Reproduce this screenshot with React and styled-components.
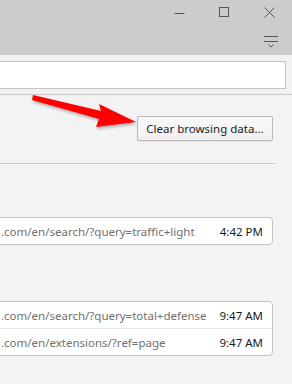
import React from 'react';
import styled, { createGlobalStyle } from 'styled-components';

const GlobalStyle = createGlobalStyle`
  html, body {
    margin: 0;
    padding: 0;
  }
  body {
    font-family: "Noto Sans", "Open Sans", sans-serif;
    background: #f3f3f3;
  }
`;

const Window = styled.div`
  position: relative;
  width: 292px;
  height: 384px;
  overflow: hidden;
  background: #f3f3f3;
`;

const TitleBar = styled.div`
  height: 55px;
  background: #cccccc;
  display: flex;
  flex-direction: column;
  align-items: flex-end;
`;

const Controls = styled.div`
  display: flex;
  height: 25px;
`;

const ControlButton = styled.div`
  width: 45px;
  height: 25px;
  display: flex;
  align-items: center;
  justify-content: center;
`;

const MenuButton = styled.div`
  width: 26px;
  height: 20px;
  margin: 7px 8px 0 0;
  display: flex;
  align-items: center;
  justify-content: center;
`;

const Toolbar = styled.div`
  height: 39px;
  background: #f2f2f2;
  border-bottom: 1px solid #c9c9c9;
  display: flex;
  align-items: center;
`;

const AddressBox = styled.div`
  flex: 1;
  height: 26px;
  margin-left: -4px;
  margin-right: 6px;
  background: #ffffff;
  border: 1px solid #c4c4c4;
`;

const Content = styled.div`
  display: flex;
  flex-direction: column;
`;

const ButtonRow = styled.div`
  display: flex;
  justify-content: flex-end;
  padding: 21px 19px 0 0;
`;

const ClearButton = styled.button`
  height: 25px;
  width: 136px;
  padding: 0;
  font-family: "Noto Sans", "Open Sans", sans-serif;
  font-size: 11.5px;
  color: #222;
  background: linear-gradient(#f9f9f9, #f0f0f0);
  border: 1px solid #b9b9b9;
  border-radius: 2px;
  box-shadow: 0 1px 1px rgba(0, 0, 0, 0.06);
`;

const Separator = styled.div`
  height: 1px;
  background: #c8c8c8;
  margin: 22px 17px 0 0;
`;

const HistoryCard = styled.div`
  margin: ${(p) => p.$top}px 19px 0 -10px;
  background: #ffffff;
  border: 1px solid #c2c2c2;
  border-radius: 4px;
`;

const HistoryRow = styled.div`
  height: 26px;
  display: flex;
  align-items: center;
  padding: 0 9px 0 10px;
  font-size: 11.5px;
  & + & {
    border-top: 1px solid #e6e6e6;
  }
`;

const Url = styled.span`
  flex: 1;
  color: #707070;
  white-space: nowrap;
`;

const Time = styled.span`
  color: #1a1a1a;
  white-space: nowrap;
`;

const Arrow = styled.svg`
  position: absolute;
  left: 28px;
  top: 92px;
  overflow: visible;
`;

const history = [
  [{ url: '.com/en/search/?query=traffic+light', time: '4:42 PM' }],
  [
    { url: '.com/en/search/?query=total+defense', time: '9:47 AM' },
    { url: '.com/en/extensions/?ref=page', time: '9:47 AM' },
  ],
];

const App = () => {
  return (
    <Window>
      <GlobalStyle />
      <TitleBar>
        <Controls>
          <ControlButton>
            <svg width="11" height="10" viewBox="0 0 11 10">
              <path d="M0.5 5.5h10" stroke="#555" strokeWidth="1" />
            </svg>
          </ControlButton>
          <ControlButton>
            <svg width="11" height="11" viewBox="0 0 11 11">
              <rect x="0.5" y="0.5" width="9" height="9" fill="none" stroke="#555" strokeWidth="1" />
            </svg>
          </ControlButton>
          <ControlButton>
            <svg width="11" height="11" viewBox="0 0 11 11">
              <path d="M0.5 0.5l10 10M10.5 0.5l-10 10" stroke="#555" strokeWidth="1" />
            </svg>
          </ControlButton>
        </Controls>
        <MenuButton>
          <svg width="14" height="12" viewBox="0 0 14 12">
            <path d="M0 0.5h14M0 5.5h14" stroke="#555" strokeWidth="1" />
            <path d="M4.5 8.5l2.5 2.5 2.5-2.5" stroke="#555" strokeWidth="1" fill="none" />
          </svg>
        </MenuButton>
      </TitleBar>
      <Toolbar>
        <AddressBox />
      </Toolbar>
      <Content>
        <ButtonRow>
          <ClearButton>Clear browsing data...</ClearButton>
        </ButtonRow>
        <Separator />
        {history.map((group, i) => (
          <HistoryCard key={i} $top={i === 0 ? 53 : 56}>
            {group.map((item, j) => (
              <HistoryRow key={j}>
                <Url>{item.url}</Url>
                <Time>{item.time}</Time>
              </HistoryRow>
            ))}
          </HistoryCard>
        ))}
      </Content>
      <Arrow width="110" height="40" viewBox="0 0 110 40">
        <defs>
          <filter id="shadow" x="-10%" y="-30%" width="130%" height="180%">
            <feDropShadow dx="1" dy="2" stdDeviation="1.5" floodColor="#000" floodOpacity="0.3" />
          </filter>
        </defs>
        <polygon
          points="5,3 73,19 71,12 108,30 68,35 71,27 4,8"
          fill="#ff0000"
          filter="url(#shadow)"
        />
      </Arrow>
    </Window>
  );
};

export default App;
